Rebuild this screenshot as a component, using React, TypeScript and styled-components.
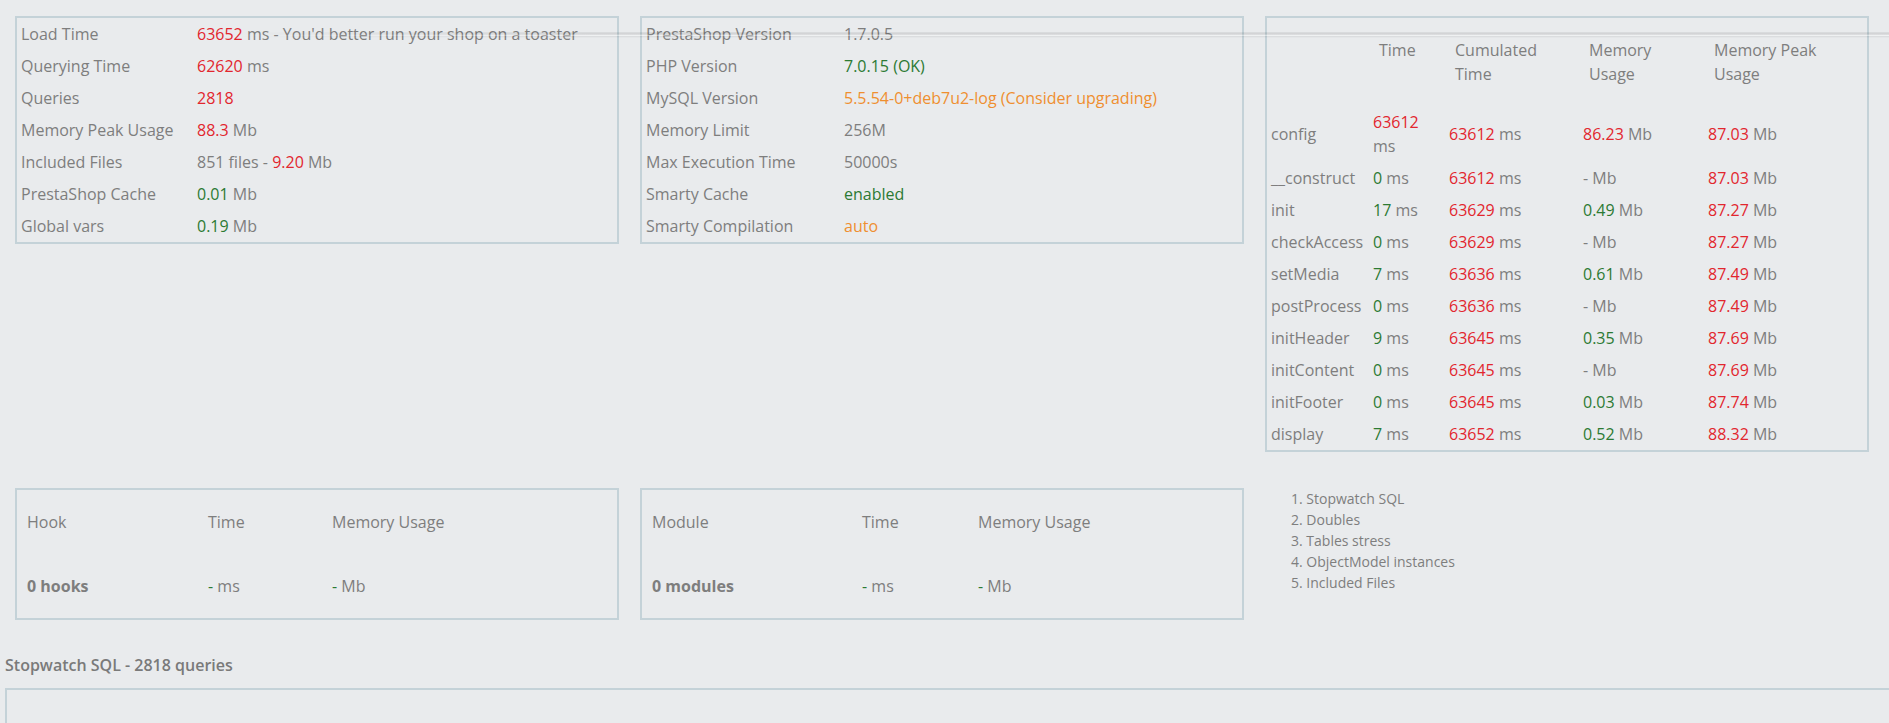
import styled, { createGlobalStyle } from "styled-components";

const GlobalStyle = createGlobalStyle`
  html, body {
    margin: 0;
    padding: 0;
    background: #e9ebed;
    overflow: hidden;
  }
  body {
    font-family: "Open Sans", "Liberation Sans", sans-serif;
    font-size: 16px;
    line-height: 24px;
    color: #7e7e7e;
  }
`;

const Page = styled.div`
  position: relative;
  padding: 16px 0 0 5px;
`;

// stray header shadow that runs over the top of the boxes
const HeaderShadow = styled.div`
  position: absolute;
  top: 32px;
  left: 0;
  right: 0;
  height: 6px;
  pointer-events: none;
  background: linear-gradient(
    to bottom,
    rgba(0, 0, 0, 0.05) 0%,
    rgba(0, 0, 0, 0.11) 35%,
    rgba(255, 255, 255, 0.45) 55%,
    rgba(0, 0, 0, 0.06) 75%,
    rgba(0, 0, 0, 0) 100%
  );
  -webkit-mask-image: linear-gradient(to right, transparent 230px, black 590px);
  mask-image: linear-gradient(to right, transparent 230px, black 590px);
`;

const Row = styled.div<{ $top?: number }>`
  display: grid;
  grid-template-columns: 604px 604px 604px;
  column-gap: 21px;
  align-items: start;
  margin-left: 10px;
  margin-top: ${(p) => p.$top ?? 0}px;
`;

const Box = styled.div`
  border: 2px solid #c4d2d8;
`;

const Table = styled.table`
  width: 100%;
  border-collapse: collapse;
  table-layout: fixed;
`;

const Cell = styled.td`
  padding: 4px;
  vertical-align: middle;
  text-align: left;
  font-weight: 400;
`;

const HeadCell = styled.th`
  padding: 20px 4px 20px 10px;
  vertical-align: top;
  text-align: left;
  font-weight: 400;
`;

const WideCell = styled.td<{ $bold?: boolean }>`
  padding: 20px 10px;
  text-align: left;
  font-weight: ${(p) => (p.$bold ? 700 : 400)};
`;

const Red = styled.span`
  color: #e2262e;
`;
const Green = styled.span`
  color: #2c7a33;
`;
const Orange = styled.span`
  color: #ef8f30;
`;

const Menu = styled.ol`
  margin: 0;
  padding: 0 0 0 26px;
  list-style: decimal inside;
  font-size: 14px;
  line-height: 21px;
`;

const SqlTitle = styled.h3`
  margin: 33px 0 11px 0;
  font-size: 16px;
  line-height: 24px;
  font-weight: 600;
  color: #7a7a7a;
`;

const SqlBox = styled.div`
  width: calc(100% + 40px);
  height: 120px;
  border: 2px solid #c4d2d8;
`;

const summary: [string, React.ReactNode][] = [
  ["Load Time", <><Red>63652</Red> ms - You'd better run your shop on a toaster</>],
  ["Querying Time", <><Red>62620</Red> ms</>],
  ["Queries", <Red>2818</Red>],
  ["Memory Peak Usage", <><Red>88.3</Red> Mb</>],
  ["Included Files", <>851 files - <Red>9.20</Red> Mb</>],
  ["PrestaShop Cache", <><Green>0.01</Green> Mb</>],
  ["Global vars", <><Green>0.19</Green> Mb</>],
];

const config: [string, React.ReactNode][] = [
  ["PrestaShop Version", "1.7.0.5"],
  ["PHP Version", <Green>7.0.15 (OK)</Green>],
  ["MySQL Version", <Orange>5.5.54-0+deb7u2-log (Consider upgrading)</Orange>],
  ["Memory Limit", "256M"],
  ["Max Execution Time", "50000s"],
  ["Smarty Cache", <Green>enabled</Green>],
  ["Smarty Compilation", <Orange>auto</Orange>],
];

type Step = {
  name: string;
  time: string;
  slow?: boolean;
  total: string;
  mem: string | null;
  heavy?: boolean;
  peak: string;
};

const steps: Step[] = [
  { name: "config", time: "63612", slow: true, total: "63612", mem: "86.23", heavy: true, peak: "87.03" },
  { name: "__construct", time: "0", total: "63612", mem: null, peak: "87.03" },
  { name: "init", time: "17", total: "63629", mem: "0.49", peak: "87.27" },
  { name: "checkAccess", time: "0", total: "63629", mem: null, peak: "87.27" },
  { name: "setMedia", time: "7", total: "63636", mem: "0.61", peak: "87.49" },
  { name: "postProcess", time: "0", total: "63636", mem: null, peak: "87.49" },
  { name: "initHeader", time: "9", total: "63645", mem: "0.35", peak: "87.69" },
  { name: "initContent", time: "0", total: "63645", mem: null, peak: "87.69" },
  { name: "initFooter", time: "0", total: "63645", mem: "0.03", peak: "87.74" },
  { name: "display", time: "7", total: "63652", mem: "0.52", peak: "88.32" },
];

function InfoTable({ rows, labelWidth }: { rows: [string, React.ReactNode][]; labelWidth: number }) {
  return (
    <Box>
      <Table>
        <colgroup>
          <col style={{ width: labelWidth }} />
          <col />
        </colgroup>
        <tbody>
          {rows.map(([label, value]) => (
            <tr key={label}>
              <Cell>{label}</Cell>
              <Cell>{value}</Cell>
            </tr>
          ))}
        </tbody>
      </Table>
    </Box>
  );
}

function StepsTable() {
  return (
    <Box>
      <Table>
        <colgroup>
          <col style={{ width: 102 }} />
          <col style={{ width: 76 }} />
          <col style={{ width: 134 }} />
          <col style={{ width: 125 }} />
          <col />
        </colgroup>
        <thead>
          <tr>
            <HeadCell></HeadCell>
            <HeadCell>Time</HeadCell>
            <HeadCell>Cumulated Time</HeadCell>
            <HeadCell>Memory Usage</HeadCell>
            <HeadCell>Memory Peak Usage</HeadCell>
          </tr>
        </thead>
        <tbody>
          {steps.map((s) => (
            <tr key={s.name}>
              <Cell>{s.name}</Cell>
              <Cell>
                {s.slow ? <Red>{s.time}</Red> : <Green>{s.time}</Green>} ms
              </Cell>
              <Cell>
                <Red>{s.total}</Red> ms
              </Cell>
              <Cell>
                {s.mem === null ? "-" : s.heavy ? <Red>{s.mem}</Red> : <Green>{s.mem}</Green>} Mb
              </Cell>
              <Cell>
                <Red>{s.peak}</Red> Mb
              </Cell>
            </tr>
          ))}
        </tbody>
      </Table>
    </Box>
  );
}

function EmptyTable({ title, total, widths }: { title: string; total: string; widths: [number, number] }) {
  return (
    <Box>
      <Table>
        <colgroup>
          <col style={{ width: widths[0] }} />
          <col style={{ width: widths[1] }} />
          <col />
        </colgroup>
        <tbody>
          <tr>
            <WideCell>{title}</WideCell>
            <WideCell>Time</WideCell>
            <WideCell>Memory Usage</WideCell>
          </tr>
          <tr>
            <WideCell $bold>{total}</WideCell>
            <WideCell>
              <Green>-</Green> ms
            </WideCell>
            <WideCell>
              <Green>-</Green> Mb
            </WideCell>
          </tr>
        </tbody>
      </Table>
    </Box>
  );
}

export default function App() {
  return (
    <>
      <GlobalStyle />
      <Page>
        <HeaderShadow />
        <Row>
          <InfoTable rows={summary} labelWidth={176} />
          <InfoTable rows={config} labelWidth={198} />
          <StepsTable />
        </Row>
        <Row $top={36}>
          <EmptyTable title="Hook" total="0 hooks" widths={[181, 124]} />
          <EmptyTable title="Module" total="0 modules" widths={[210, 116]} />
          <Menu>
            <li>Stopwatch SQL</li>
            <li>Doubles</li>
            <li>Tables stress</li>
            <li>ObjectModel instances</li>
            <li>Included Files</li>
          </Menu>
        </Row>
        <SqlTitle>Stopwatch SQL - 2818 queries</SqlTitle>
        <SqlBox />
      </Page>
    </>
  );
}
